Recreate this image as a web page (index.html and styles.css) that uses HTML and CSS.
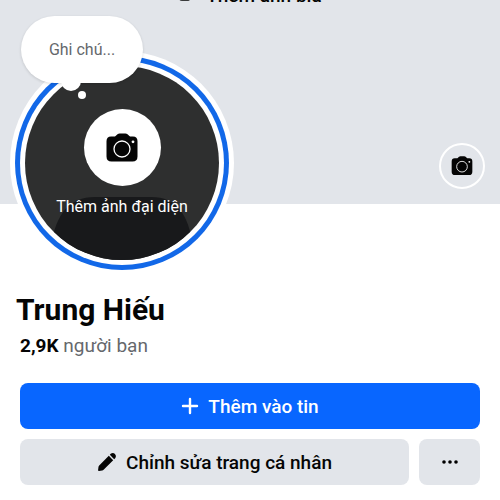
FILE: index.html
```html
<!DOCTYPE html>
<html lang="vi">
<head>
<meta charset="utf-8">
<meta name="viewport" content="width=device-width, initial-scale=1">
<title>Trung Hiếu</title>
<link rel="stylesheet" href="styles.css">
</head>
<body>
<svg class="defs" aria-hidden="true">
  <symbol id="camera" viewBox="0 0 32 30">
    <path fill="#050505" d="M11.5 1.2Q12.4 0.5 13.6 0.5H19.4Q20.6 0.5 21.5 1.2L23.4 2.9Q24 3.5 25 3.5H27Q31.5 3.7 31.5 8.3V23.5Q31.5 28.5 26.5 28.5H5.5Q0.5 28.5 0.5 23.5V8.3Q0.5 3.7 5 3.5H8Q9 3.5 9.6 2.9Z"/>
    <circle cx="16" cy="16" r="8" fill="none" stroke="#fff" stroke-width="1.3"/>
    <circle cx="27" cy="8.8" r="1.4" fill="#fff"/>
  </symbol>
</svg>
<header class="cover">
  <button class="cover-add" type="button">
    <svg width="14" height="14" viewBox="0 0 14 14" aria-hidden="true"><path fill="#3a3b3c" d="M4 0H12V10Q12 12 10 12H4Q1 12 1 9V3Q1 0 4 0Z"/></svg>
    <span>Thêm ảnh bìa</span>
  </button>
  <button class="cover-camera" type="button" aria-label="Đổi ảnh bìa">
    <svg width="22" height="20" aria-hidden="true"><use href="#camera"/></svg>
  </button>
  <button class="avatar" type="button">
    <svg class="silhouette" viewBox="0 0 194 194" aria-hidden="true">
      <path fill="#18191b" d="M26 194V180C31 148 44 131 70 131H126C152 131 163 148 168 180V194Z"/>
    </svg>
    <span class="avatar-camera"><svg width="32" height="30" aria-hidden="true"><use href="#camera"/></svg></span>
    <span class="avatar-label">Thêm ảnh đại diện</span>
  </button>
  <button class="note" type="button">Ghi chú...</button>
</header>
<main class="profile">
  <h1>Trung Hiếu</h1>
  <a class="friends" href="#friends"><strong>2,9K</strong> người bạn</a>
  <div class="actions">
    <button class="btn primary" type="button">
      <svg width="18" height="18" viewBox="0 0 18 18" aria-hidden="true"><path d="M9 2V16M2 9H16" stroke="#fff" stroke-width="2.4" stroke-linecap="round"/></svg>
      Thêm vào tin
    </button>
    <button class="btn edit" type="button">
      <svg width="20" height="20" viewBox="0 0 20 20" aria-hidden="true"><path fill="#050505" d="M11.8 3.8L16.2 8.2L6.6 17.8Q6 18.4 5.2 18.5L2 19Q1 19.1 1.1 18L1.5 14.8Q1.6 14 2.2 13.4ZM12.8 2.8L14 1.6Q16 .2 18 2Q19.8 4 18.4 6L17.2 7.2Z"/></svg>
      Chỉnh sửa trang cá nhân
    </button>
    <button class="btn more" type="button" aria-label="Xem thêm">
      <svg width="18" height="6" viewBox="0 0 18 6" aria-hidden="true"><circle cx="3" cy="3" r="1.8"/><circle cx="9" cy="3" r="1.8"/><circle cx="15" cy="3" r="1.8"/></svg>
    </button>
  </div>
</main>
</body>
</html>
```
FILE: styles.css
```css
* {
  box-sizing: border-box;
}

body {
  margin: 0;
  background: #fff;
  color: #050505;
  font-family: Roboto, "Liberation Sans", sans-serif;
}

button {
  border: 0;
  padding: 0;
  color: inherit;
  font: inherit;
  cursor: pointer;
}

svg {
  display: block;
  flex: none;
}

.defs {
  position: absolute;
  width: 0;
  height: 0;
}

.cover {
  position: relative;
  display: flex;
  justify-content: center;
  align-items: flex-start;
  height: 204px;
  background: #e2e5ea;
}

.cover-add {
  display: flex;
  align-items: center;
  gap: 14px;
  margin-top: -16px;
  background: none;
  font-size: 19px;
  font-weight: 500;
  line-height: 24px;
}

.cover-camera {
  position: absolute;
  right: 15px;
  bottom: 15px;
  display: grid;
  place-items: center;
  width: 46px;
  height: 46px;
  border: 2px solid #fff;
  border-radius: 50%;
  background: #e2e5ea;
}

.avatar {
  position: absolute;
  left: 25px;
  top: 66px;
  display: flex;
  flex-direction: column;
  align-items: center;
  width: 194px;
  height: 194px;
  padding-top: 43px;
  border-radius: 50%;
  background: #2e2f2f;
  box-shadow: 0 0 0 5px #fff, 0 0 0 10px #1268e8, 0 0 0 15px #fff;
  color: #fff;
}

.silhouette {
  position: absolute;
  inset: 0;
  border-radius: 50%;
}

.avatar-camera {
  position: relative;
  display: grid;
  place-items: center;
  width: 77px;
  height: 77px;
  border-radius: 50%;
  background: #fff;
}

.avatar-label {
  position: relative;
  margin-top: 9px;
  font-size: 16px;
  line-height: 24px;
  white-space: nowrap;
}

.note {
  position: absolute;
  left: 21px;
  top: 16px;
  width: 122px;
  height: 67px;
  border-radius: 34px;
  background: #fff;
  box-shadow: 0 1px 3px rgb(0 0 0 / 14%);
  color: #65686c;
  font-size: 16px;
}

.note::before,
.note::after {
  content: "";
  position: absolute;
  border-radius: 50%;
  background: #fff;
}

.note::before {
  left: 40px;
  bottom: -8px;
  width: 20px;
  height: 20px;
}

.note::after {
  left: 57px;
  bottom: -16px;
  width: 8px;
  height: 8px;
}

.profile {
  padding: 86px 20px 14px;
}

h1 {
  margin: 0 -4px;
  font-size: 30px;
  font-weight: 700;
  line-height: 40px;
}

.friends {
  display: block;
  margin-top: 4px;
  color: #65686c;
  font-size: 19px;
  line-height: 24px;
  text-decoration: none;
}

.friends strong {
  color: #050505;
}

.actions {
  display: grid;
  grid-template-columns: 1fr 61px;
  gap: 10px;
  margin-top: 25px;
}

.btn {
  display: flex;
  align-items: center;
  justify-content: center;
  gap: 9px;
  height: 46px;
  border-radius: 8px;
  background: #e2e5ea;
  font-size: 19px;
  font-weight: 500;
}

.primary {
  grid-column: 1 / -1;
  background: #0866ff;
  color: #fff;
}
```
